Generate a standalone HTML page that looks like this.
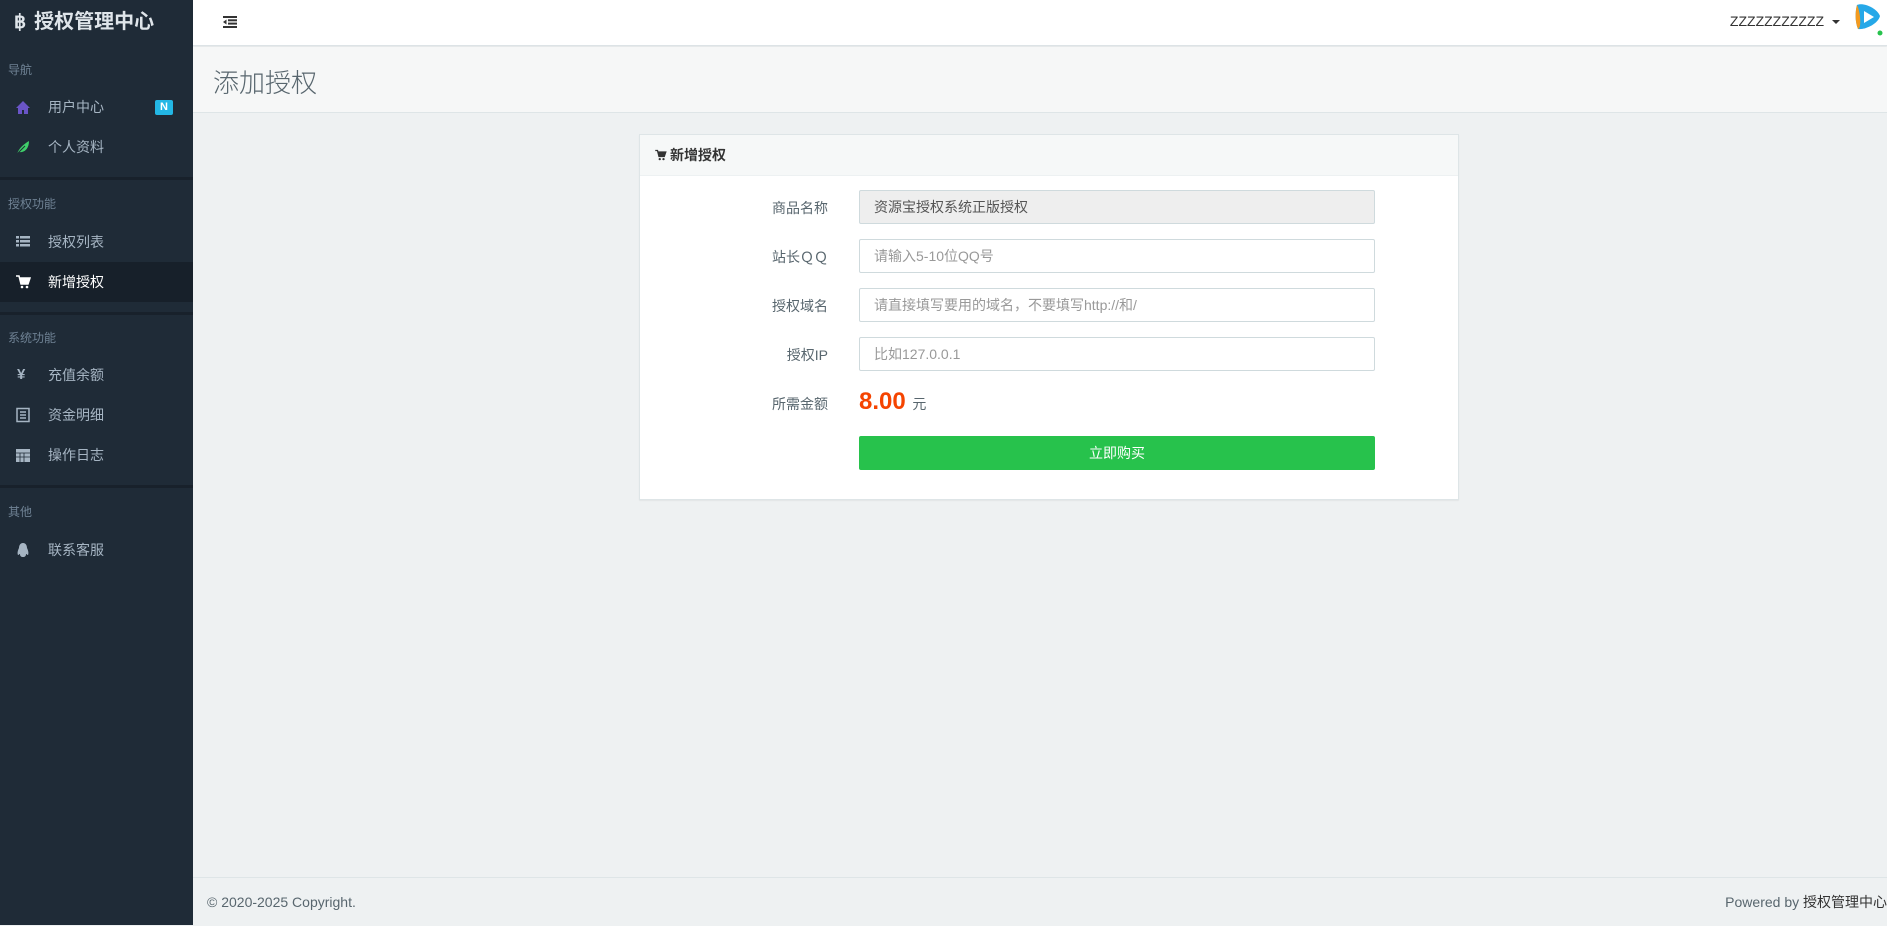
<!DOCTYPE html>
<html><head><meta charset="utf-8"><style>
*{box-sizing:border-box;margin:0;padding:0}
body{width:1887px;height:925px;overflow:hidden;font-family:"Liberation Sans","Noto Sans CJK SC",sans-serif;background:#eef1f2;position:relative;font-size:14px;color:#58666e}
.side{position:absolute;left:0;top:0;width:193px;height:925px;background:#1f2b37}
.logo{position:absolute;left:14px;top:8px;font-size:20px;font-weight:bold;color:#dfe5ea;height:28px;line-height:28px}
.sec{position:absolute;left:8px;font-size:12px;color:#6f8294}
.it{position:absolute;left:0;width:193px;height:40px;line-height:40px;font-size:14px;color:#a6b5c3}
.it .t{position:absolute;left:48px}
.it .ic{position:absolute;left:15px;top:12px;width:16px;height:16px}
.div{position:absolute;left:0;width:193px;height:3px;background:#18212b}
.top{position:absolute;left:193px;top:0;right:0;height:46px;background:#fff;border-bottom:1px solid #dde3e6;box-shadow:0 1px 2px rgba(0,0,0,.05)}
.title{position:absolute;left:193px;top:47px;right:0;height:66px;background:#f6f7f7;border-bottom:1px solid #dee5e7}
.title span{position:absolute;left:20px;top:16px;font-size:26px;color:#58666e;font-weight:300}
.card{position:absolute;left:639px;top:134px;width:820px;height:366px;background:#fff;border:1px solid #dee5e7;box-shadow:0 1px 1px rgba(0,0,0,.05)}
.ch{height:41px;background:#f6f8f8;border-bottom:1px solid #edf1f2;padding-left:14px;line-height:40px;font-size:14px;font-weight:bold;color:#333}
.lab{position:absolute;right:630px;font-size:14px;color:#58666e;text-align:right}
.inp{position:absolute;left:219px;width:516px;height:34px;border:1px solid #cfdadd;border-radius:2px;padding-left:14px;line-height:32px;font-size:14px;color:#999}
.foot{position:absolute;left:193px;right:0;top:877px;height:48px;border-top:1px solid #dee5e7;background:#eef1f2;line-height:48px;font-size:14px;color:#58666e}
</style></head><body>
<div class="side">
<div class="logo"><span style="font-size:19px;margin-right:8px">฿</span>授权管理中心</div>
<div class="sec" style="top:61px">导航</div>
<div class="it" style="top:87px;"><svg class="ic" viewBox="0 0 16 16"><path d="M8 2L1 9h2v6h4v-4h2v4h4V9h2z" fill="#6a55c7"/></svg><span class="t">用户中心</span><span style="position:absolute;left:155px;top:13px;width:18px;height:15px;background:#23b7e5;border-radius:2px;color:#fff;font-size:11px;font-weight:bold;line-height:15px;text-align:center">N</span></div>
<div class="it" style="top:127px"><svg class="ic" viewBox="0 0 16 16"><path d="M2 15C4 9 9 5 14 2 14 9 10 14 4 13z" fill="#3fcf6a"/><path d="M2 15L10 7" stroke="#1f2b37" stroke-width="1"/></svg><span class="t">个人资料</span></div>
<div class="div" style="top:177px"></div>
<div class="sec" style="top:195px">授权功能</div>
<div class="it" style="top:222px"><svg class="ic" viewBox="0 0 16 16" fill="#a6b5c3"><rect x="1" y="2" width="3" height="2.5"/><rect x="5" y="2" width="10" height="2.5"/><rect x="1" y="6" width="3" height="2.5"/><rect x="5" y="6" width="10" height="2.5"/><rect x="1" y="10" width="3" height="2.5"/><rect x="5" y="10" width="10" height="2.5"/></svg><span class="t">授权列表</span></div>
<div class="it" style="top:262px;background:#17202a;color:#fff"><svg class="ic" viewBox="0 0 16 16" fill="#fff"><path d="M1 2h3l2 8h7l2-6H5" stroke="#fff" stroke-width="1.5" fill="none"/><path d="M5 4h10l-2 6H6z"/><circle cx="7" cy="13" r="1.3"/><circle cx="12" cy="13" r="1.3"/></svg><span class="t">新增授权</span></div>
<div class="div" style="top:312px"></div>
<div class="sec" style="top:329px">系统功能</div>
<div class="it" style="top:355px"><span class="ic" style="top:0;font-weight:bold;font-size:15px;color:#a6b5c3;left:17px">¥</span><span class="t">充值余额</span></div>
<div class="it" style="top:395px"><svg class="ic" viewBox="0 0 16 16" fill="none" stroke="#a6b5c3" stroke-width="1.5"><rect x="2" y="1.5" width="12" height="13"/><path d="M5 5h6M5 8h6M5 11h6"/></svg><span class="t">资金明细</span></div>
<div class="it" style="top:435px"><svg class="ic" viewBox="0 0 16 16" fill="#a6b5c3"><rect x="1" y="2" width="14" height="13"/><path d="M1 6h14M5 6v9M9 6v9M1 10h14" stroke="#1f2b37" stroke-width=".8"/></svg><span class="t">操作日志</span></div>
<div class="div" style="top:485px"></div>
<div class="sec" style="top:503px">其他</div>
<div class="it" style="top:530px"><svg class="ic" viewBox="0 0 16 16" fill="#a6b5c3"><path d="M8 1C5 1 4 4 4 6 3 8 2 11 3 13c1 0 1-1 2-1 0 2 1 3 3 3s3-1 3-3c1 0 1 1 2 1 1-2 0-5-1-7 0-2-1-5-4-5z"/></svg><span class="t">联系客服</span></div>
</div>
<div class="top">
<svg style="position:absolute;left:30px;top:16px" width="14" height="12" viewBox="0 0 14 12" fill="#333"><rect x="0" y="0" width="14" height="2"/><rect x="5" y="3.3" width="9" height="2"/><rect x="5" y="6.6" width="9" height="2"/><rect x="0" y="10" width="14" height="2"/><path d="M0 6L3.5 3.5v5z"/></svg>
<span style="position:absolute;right:63px;top:13px;font-size:14px;color:#333">ZZZZZZZZZZZ</span>
<span style="position:absolute;right:47px;top:20px;border:4px solid transparent;border-top-color:#333;border-bottom:0"></span>
<svg style="position:absolute;right:4px;top:2px" width="30" height="34" viewBox="0 0 30 34"><path d="M4 3C10 0 24 6 27 14 25 22 12 28 5 27 2 20 2 10 4 3z" fill="#26a8e8"/><path d="M4 3C2 10 2 20 5 27 9 26 7 8 4 3z" fill="#f39a1f"/><path d="M11 9L21 15 11 21z" fill="#fff"/><circle cx="27" cy="31" r="2.5" fill="#27c24c"/></svg>
</div>
<div class="title"><span>添加授权</span></div>
<div class="card">
<div class="ch"><svg width="13" height="12" viewBox="0 0 16 16" style="vertical-align:-1px;margin-right:3px"><path d="M1 2h3l2 8h7l2-6H5" stroke="#333" stroke-width="1.8" fill="none"/><path d="M5 4h10l-2 6H6z" fill="#333"/><circle cx="7" cy="13.5" r="1.5" fill="#333"/><circle cx="12" cy="13.5" r="1.5" fill="#333"/></svg>新增授权</div>
<div class="lab" style="top:63px">商品名称</div>
<div class="inp" style="top:55px;background:#eee;color:#555">资源宝授权系统正版授权</div>
<div class="lab" style="top:112px">站长ＱＱ</div>
<div class="inp" style="top:104px">请输入5-10位QQ号</div>
<div class="lab" style="top:161px">授权域名</div>
<div class="inp" style="top:153px">请直接填写要用的域名，不要填写http://和/</div>
<div class="lab" style="top:210px">授权IP</div>
<div class="inp" style="top:202px">比如127.0.0.1</div>
<div class="lab" style="top:259px">所需金额</div>
<div style="position:absolute;left:219px;top:253px;color:#f54400;font-size:24px;font-weight:bold">8.00 <span style="font-size:14px;color:#58666e;font-weight:normal">元</span></div>
<div style="position:absolute;left:219px;top:301px;width:516px;height:34px;background:#27c24c;border-radius:2px;color:#fff;text-align:center;line-height:34px;font-size:14px">立即购买</div>
</div>
<div class="foot"><span style="position:absolute;left:14px">© 2020-2025 Copyright.</span><span style="position:absolute;right:0">Powered by <span style="color:#333">授权管理中心</span></span></div>
</body></html>
